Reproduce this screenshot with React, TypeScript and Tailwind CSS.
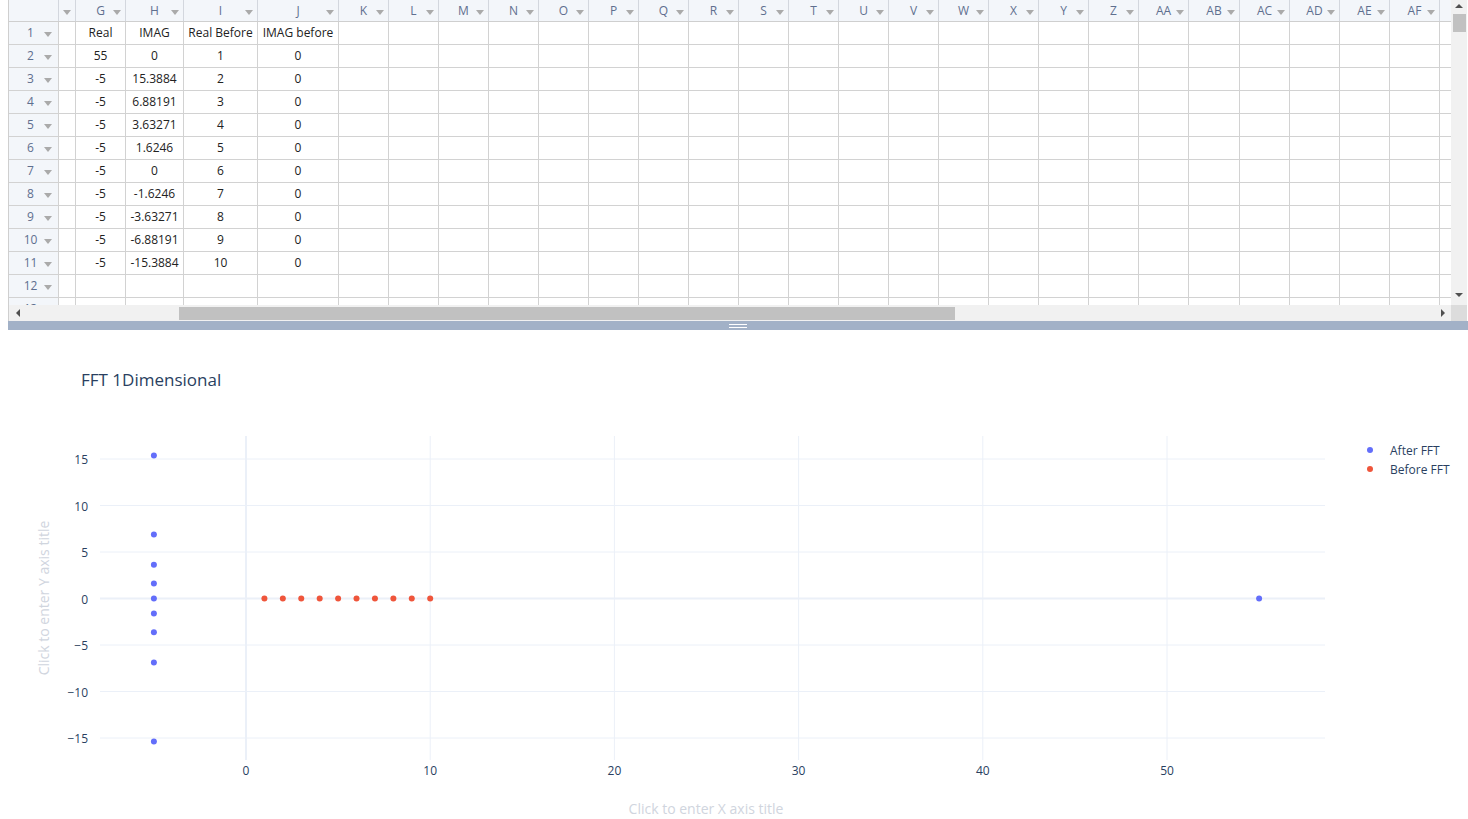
import React from "react";

interface Col {
  key: string;
  w: string;
}

const cols: Col[] = [
  { key: "", w: "w-[17px]" },
  { key: "G", w: "w-[50px]" },
  { key: "H", w: "w-[58px]" },
  { key: "I", w: "w-[74px]" },
  { key: "J", w: "w-[81px]" },
  ...["K", "L", "M", "N", "O", "P", "Q", "R", "S", "T", "U", "V", "W", "X", "Y", "Z", "AA"].map((k) => ({ key: k, w: "w-[50px]" })),
  { key: "AB", w: "w-[51px]" },
  ...["AC", "AD", "AE", "AF"].map((k) => ({ key: k, w: "w-[50px]" })),
];

const data: string[][] = [
  ["", "Real", "IMAG", "Real Before", "IMAG before"],
  ["", "55", "0", "1", "0"],
  ["", "-5", "15.3884", "2", "0"],
  ["", "-5", "6.88191", "3", "0"],
  ["", "-5", "3.63271", "4", "0"],
  ["", "-5", "1.6246", "5", "0"],
  ["", "-5", "0", "6", "0"],
  ["", "-5", "-1.6246", "7", "0"],
  ["", "-5", "-3.63271", "8", "0"],
  ["", "-5", "-6.88191", "9", "0"],
  ["", "-5", "-15.3884", "10", "0"],
  [],
  [],
];

const DownArrow = () => (
  <span className="h-0 w-0 border-x-[4px] border-t-[5px] border-x-transparent border-t-[#aaaaaa]" />
);

const HeaderRow = () => (
  <div className="flex h-[22px] shrink-0 border-b border-[#cfcfcf] bg-[#f3f6fa] text-[#5f6f8f]">
    <div className="w-[50px] shrink-0 border-r border-[#d3d7de]" />
    {cols.map((c, i) => (
      <div key={i} className={`${c.w} relative flex shrink-0 items-center justify-center border-r border-[#d3d7de]`}>
        {c.key}
        <span className={c.key ? "absolute right-[4px] top-[10px] flex" : "mt-[3px] flex"}>
          <DownArrow />
        </span>
      </div>
    ))}
    <div className="flex-1" />
  </div>
);

const Row = ({ n, cells }: { n: number; cells: string[] }) => (
  <div className="flex h-[23px] shrink-0 border-b border-[#d2d2d2]">
    <div className="relative flex w-[50px] shrink-0 items-center border-r border-[#d2d2d2] bg-[#f3f6fa] text-[#5f6f8f]">
      <span className="w-[43px] text-center">{n}</span>
      <span className="absolute right-[6px] top-[10px] flex">
        <DownArrow />
      </span>
    </div>
    {cols.map((c, i) => (
      <div key={i} className={`${c.w} flex shrink-0 items-center justify-center border-r border-[#d2d2d2] text-[#222]`}>
        {cells[i] ?? ""}
      </div>
    ))}
    <div className="flex-1" />
  </div>
);

const HScroll = () => (
  <div className="flex h-4 items-center bg-[#f1f1f1]">
    <div className="flex w-[17px] justify-center">
      <span className="h-0 w-0 border-y-[4px] border-r-[4px] border-y-transparent border-r-[#505050]" />
    </div>
    <div className="flex-1 py-[2px]">
      <div className="ml-[153px] h-[13px] w-[776px] bg-[#c1c1c1]" />
    </div>
    <div className="flex w-[17px] justify-center">
      <span className="h-0 w-0 border-y-[4px] border-l-[4px] border-y-transparent border-l-[#505050]" />
    </div>
  </div>
);

const VScroll = () => (
  <div className="flex w-4 flex-col">
    <div className="flex h-[305px] flex-col items-center bg-[#f1f1f1]">
      <span className="mt-[4px] h-0 w-0 border-x-[4px] border-b-[4px] border-x-transparent border-b-[#505050]" />
      <div className="mt-[6px] h-[18px] w-[13px] bg-[#c1c1c1]" />
      <div className="flex-1" />
      <span className="mb-[8px] h-0 w-0 border-x-[4px] border-t-[4px] border-x-transparent border-t-[#505050]" />
    </div>
    <div className="h-4 bg-[#dcdcdc]" />
  </div>
);

const X = (v: number) => 246 + v * 18.42;
const Y = (v: number) => 268.5 - v * 9.3;

const after: [number, number][] = [
  [55, 0],
  [-5, 15.3884],
  [-5, 6.88191],
  [-5, 3.63271],
  [-5, 1.6246],
  [-5, 0],
  [-5, -1.6246],
  [-5, -3.63271],
  [-5, -6.88191],
  [-5, -15.3884],
];
const before: [number, number][] = [1, 2, 3, 4, 5, 6, 7, 8, 9, 10].map((v) => [v, 0]);

const Chart = () => (
  <svg width={1468} height={489} className="block">
    <text x={81} y={56} fontSize={17} fill="#2a3f5f">
      FFT 1Dimensional
    </text>
    {[10, 20, 30, 40, 50].map((v) => (
      <line key={v} x1={X(v)} x2={X(v)} y1={106} y2={430} stroke="#ebf0f8" strokeWidth={1} />
    ))}
    {[-15, -10, -5, 5, 10, 15].map((v) => (
      <line key={v} x1={100} x2={1325} y1={Y(v)} y2={Y(v)} stroke="#ebf0f8" strokeWidth={1} />
    ))}
    <line x1={X(0)} x2={X(0)} y1={106} y2={430} stroke="#ebf0f8" strokeWidth={2} />
    <line x1={100} x2={1325} y1={Y(0)} y2={Y(0)} stroke="#ebf0f8" strokeWidth={2} />
    {[15, 10, 5, 0, -5, -10, -15].map((v) => (
      <text key={v} x={88} y={Y(v) + 5} fontSize={12} fill="#2a3f5f" textAnchor="end">
        {v < 0 ? `\u2212${-v}` : v}
      </text>
    ))}
    {[0, 10, 20, 30, 40, 50].map((v) => (
      <text key={v} x={X(v)} y={445} fontSize={12} fill="#2a3f5f" textAnchor="middle">
        {v}
      </text>
    ))}
    <text
      x={45}
      y={268}
      fontSize={14}
      fill="#d0d5de"
      textAnchor="middle"
      transform="rotate(-90 45 268)"
      dominantBaseline="middle"
    >
      Click to enter Y axis title
    </text>
    <text x={706} y={484} fontSize={14} fill="#d0d5de" textAnchor="middle">
      Click to enter X axis title
    </text>
    {after.map(([x, y], i) => (
      <circle key={`a${i}`} cx={X(x)} cy={Y(y)} r={3} fill="#636efa" />
    ))}
    {before.map(([x, y], i) => (
      <circle key={`b${i}`} cx={X(x)} cy={Y(y)} r={3} fill="#ef553b" />
    ))}
    <circle cx={1370} cy={120} r={3} fill="#636efa" />
    <text x={1390} y={125} fontSize={12} fill="#2a3f5f">
      After FFT
    </text>
    <circle cx={1370} cy={139} r={3} fill="#ef553b" />
    <text x={1390} y={144} fontSize={12} fill="#2a3f5f">
      Before FFT
    </text>
  </svg>
);

export default function App() {
  return (
    <div className="h-[819px] w-[1468px] overflow-hidden bg-white font-['Open_Sans',sans-serif] text-[12px]">
      <div className="flex h-[321px] pl-2">
        <div className="flex w-[1443px] flex-col border-l border-[#cfcfcf]">
          <div className="flex h-[305px] flex-col overflow-hidden">
            <HeaderRow />
            {data.map((cells, i) => (
              <Row key={i} n={i + 1} cells={cells} />
            ))}
          </div>
          <HScroll />
        </div>
        <VScroll />
      </div>
      <div className="ml-2 flex h-[9px] flex-col items-center justify-center gap-[2px] bg-[#a2b1c7]">
        <div className="h-px w-[18px] bg-white" />
        <div className="h-px w-[18px] bg-white" />
      </div>
      <Chart />
    </div>
  );
}
